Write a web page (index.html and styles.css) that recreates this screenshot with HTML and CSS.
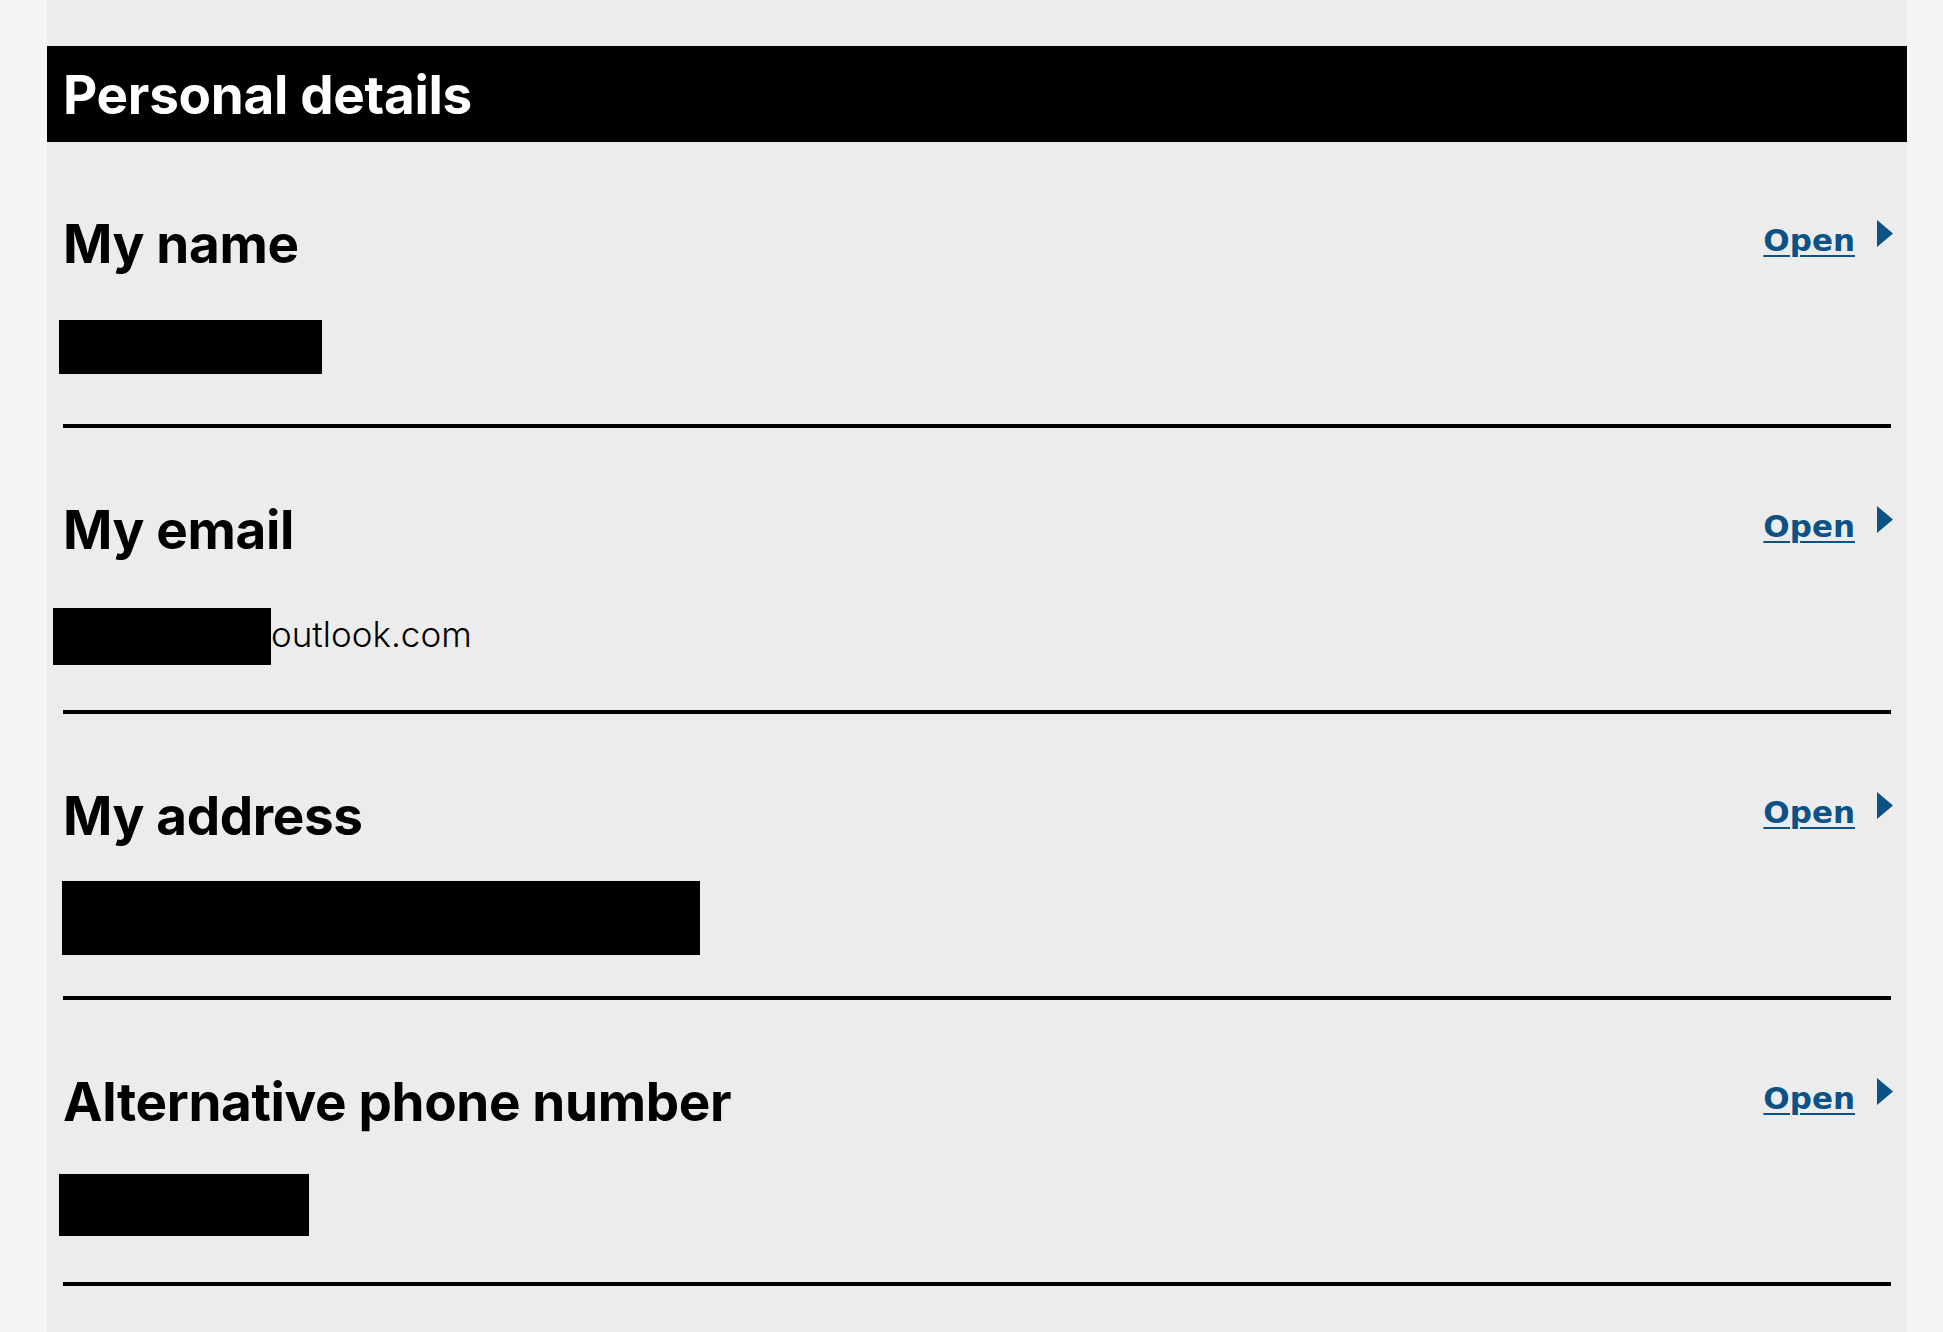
FILE: index.html
```html
<!DOCTYPE html>
<html lang="en">
<head>
  <meta charset="UTF-8" />
  <meta name="viewport" content="width=device-width, initial-scale=1.0"/>
  <title>Personal details</title>
  <link rel="stylesheet" href="styles.css">
</head>
<body>
  <div class="panel">
    <h1 class="panel-title">Personal details</h1>

    <div class="detail">
      <div class="detail-head">
        <h2>My name</h2>
        <a class="open-link" href="#">
          <span class="open-text">Open</span>
          <svg class="caret" width="16" height="27" viewBox="0 0 16 27"><path d="M0 0 L16 13.5 L0 27 Z"/></svg>
        </a>
      </div>
      <div class="detail-value">
        <span class="redact redact-name"></span>
      </div>
    </div>

    <div class="detail">
      <div class="detail-head">
        <h2>My email</h2>
        <a class="open-link" href="#">
          <span class="open-text">Open</span>
          <svg class="caret" width="16" height="27" viewBox="0 0 16 27"><path d="M0 0 L16 13.5 L0 27 Z"/></svg>
        </a>
      </div>
      <div class="detail-value">
        <span class="redact redact-email"></span><span class="value-text">outlook.com</span>
      </div>
    </div>

    <div class="detail">
      <div class="detail-head">
        <h2>My address</h2>
        <a class="open-link" href="#">
          <span class="open-text">Open</span>
          <svg class="caret" width="16" height="27" viewBox="0 0 16 27"><path d="M0 0 L16 13.5 L0 27 Z"/></svg>
        </a>
      </div>
      <div class="detail-value">
        <span class="redact redact-address"></span>
      </div>
    </div>

    <div class="detail">
      <div class="detail-head">
        <h2>Alternative phone number</h2>
        <a class="open-link" href="#">
          <span class="open-text">Open</span>
          <svg class="caret" width="16" height="27" viewBox="0 0 16 27"><path d="M0 0 L16 13.5 L0 27 Z"/></svg>
        </a>
      </div>
      <div class="detail-value">
        <span class="redact redact-phone"></span>
      </div>
    </div>
  </div>
</body>
</html>
```

FILE: styles.css
```css
body {
  margin: 0;
  padding: 0;
  background: #f5f5f5;
  font-family: Inter, "Liberation Sans", sans-serif;
  color: #000;
  min-height: 100vh;
}

.panel {
  width: 1860px;
  margin-left: 47px;
  padding-top: 46px;
  background: #ececec;
  min-height: 1286px;
}

.panel-title {
  margin: 0;
  height: 96px;
  padding-left: 16px;
  background: #000;
  color: #fff;
  font-size: 53px;
  font-weight: 700;
  line-height: 98px;
  letter-spacing: -0.3px;
}

/* one row per detail, closed by a heavy rule */
.detail {
  margin: 0 16px;
  padding-top: 72px;
  padding-bottom: 40px;
  border-bottom: 4px solid #000;
}

.detail-head {
  display: flex;
  justify-content: space-between;
  align-items: flex-start;
  margin-right: -2px;
}

.detail-head h2 {
  margin: 0;
  font-size: 53px;
  font-weight: 700;
  line-height: 60px;
  letter-spacing: -0.35px;
}

.open-link {
  display: flex;
  align-items: flex-start;
  gap: 22px;
  color: #0b5286;
  text-decoration: none;
}

.open-text {
  margin-top: 8px;
  font-family: "DejaVu Sans", Verdana, sans-serif;
  font-size: 31px;
  font-weight: 700;
  line-height: 36px;
  text-decoration: underline;
  text-decoration-thickness: 2px;
  text-underline-offset: 4px;
}

.caret {
  margin-top: 6px;
  fill: #0b5286;
}

.detail-value {
  display: flex;
  align-items: center;
  height: 74px;
  margin-top: 36px;
}

.redact {
  display: inline-block;
  background: #000;
}

.redact-name {
  width: 263px;
  height: 54px;
  margin-left: -4px;
}

.redact-email {
  width: 218px;
  height: 57px;
  margin-left: -10px;
  margin-top: 6px;
}

.redact-address {
  width: 638px;
  height: 74px;
  margin-left: -1px;
  margin-top: -3px;
}

.redact-phone {
  width: 250px;
  height: 62px;
  margin-left: -4px;
}

.value-text {
  font-size: 35px;
  font-weight: 300;
  line-height: 40px;
  margin-top: 1px;
}
```
